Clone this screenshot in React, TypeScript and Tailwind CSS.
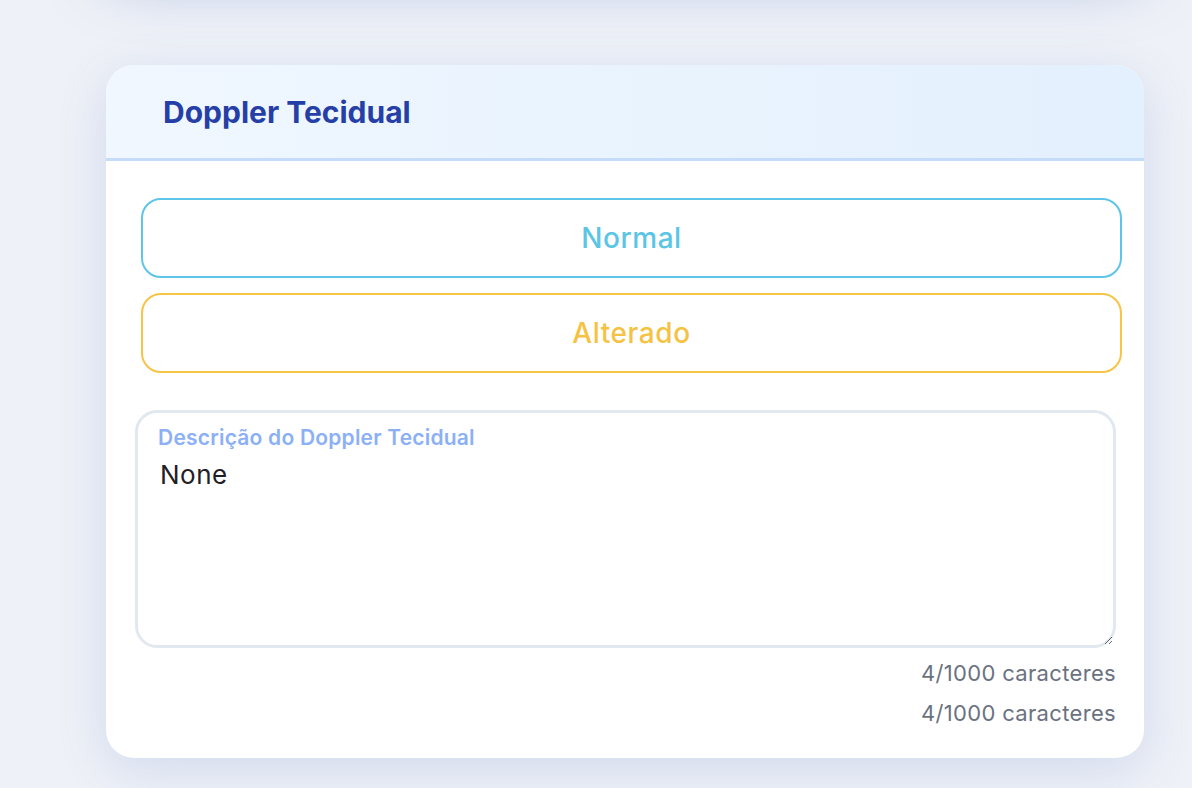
import React from "react";

export default function App() {
  return (
    <div
      className="min-h-screen overflow-hidden bg-[#eef1f7] pt-[65px] pl-[106px]"
      style={{ fontFamily: "Inter, 'Noto Sans', sans-serif" }}
    >
      <div className="w-[1038px] h-[200px] -mt-[310px] mb-[110px] rounded-[28px] bg-white shadow-[0_20px_60px_rgba(70,100,190,0.5)]" />
      <div className="w-[1038px] rounded-[28px] bg-white overflow-hidden shadow-[0_12px_50px_rgba(70,100,190,0.16)]">
        <div className="h-[96px] flex items-center pl-[57px] bg-gradient-to-r from-[#f0f7ff] to-[#e3f0fd] border-b-[3px] border-[#c4dbf9]">
          <h1 className="text-[30px] leading-[36px] font-bold text-[#263fa6]">Doppler Tecidual</h1>
        </div>
        <div className="pt-[37px] pl-[29px] pr-[28px] pb-[30px]">
          <div className="flex flex-col gap-[15px] pl-[6px] mr-[-6px]">
            <button className="h-[80px] w-full rounded-[20px] border-2 border-[#5dc6e8] bg-white text-[28px] font-medium tracking-[0.02em] text-[#5bc5e6]">
              Normal
            </button>
            <button className="h-[80px] w-full rounded-[20px] border-2 border-[#f7c446] bg-white text-[28px] font-medium tracking-[0.02em] text-[#f6c243]">
              Alterado
            </button>
          </div>
          <div className="relative mt-[37px]">
            <label className="absolute top-[14px] left-[23px] text-[21px] leading-[28px] font-semibold tracking-[0.01em] text-[#8cb0f6]">
              Descrição do Doppler Tecidual
            </label>
            <textarea
              className="block w-full h-[238px] rounded-[22px] border-[3px] border-[#e2e8f0] bg-white pt-[44px] px-[22px] text-[26px] leading-[36px] tracking-[0.02em] text-[#1f2124] outline-none"
              defaultValue="None"
            />
          </div>
          <div className="mt-[10px] flex flex-col items-end gap-[10px] text-[22px] leading-[30px] tracking-[0.015em] text-[#6b7280]">
            <span>4/1000 caracteres</span>
            <span>4/1000 caracteres</span>
          </div>
        </div>
      </div>
    </div>
  );
}
